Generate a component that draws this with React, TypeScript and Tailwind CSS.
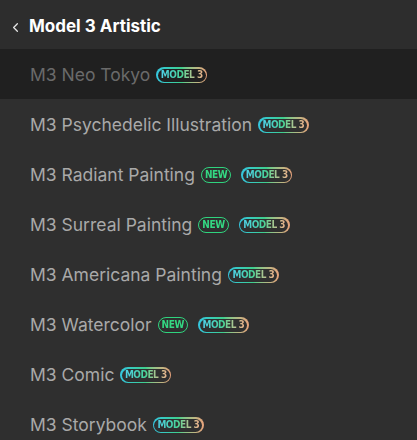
import { ChevronLeft } from "lucide-react";

const styles = [
    { name: "M3 Neo Tokyo", isNew: false, active: true },
    { name: "M3 Psychedelic Illustration", isNew: false },
    { name: "M3 Radiant Painting", isNew: true },
    { name: "M3 Surreal Painting", isNew: true },
    { name: "M3 Americana Painting", isNew: false },
    { name: "M3 Watercolor", isNew: true },
    { name: "M3 Comic", isNew: false },
    { name: "M3 Storybook", isNew: false },
];

const badgeFont = {
    fontFamily: '"DejaVu Sans Condensed", "DejaVu Sans", sans-serif',
};

const ModelBadge = ({ active }: { active?: boolean }) => (
    <span className="inline-flex rounded-full bg-gradient-to-r from-[#35c6e0] via-[#3fcf8c] to-[#e9a27c] p-[1.5px]">
        <span
            className={
                "flex h-[13px] items-center rounded-full px-[3px] " +
                (active ? "bg-[#202020]" : "bg-[#2f2f2f]")
            }
        >
            <span
                style={badgeFont}
                className="inline-block scale-y-110 bg-gradient-to-r from-[#4fd0e8] via-[#48d395] to-[#eab28c] bg-clip-text text-[10px] font-bold leading-none tracking-[-0.5px] text-transparent"
            >
                MODEL 3
            </span>
        </span>
    </span>
);

const NewBadge = () => (
    <span
        style={badgeFont}
        className="flex h-4 items-center rounded-full border-[1.5px] border-[#2fd47e] px-[3px] text-[10px] font-bold leading-none tracking-[-0.4px] text-[#34d883]"
    >
        <span className="inline-block scale-y-110">NEW</span>
    </span>
);

export default function App() {
    return (
        <div className="h-[440px] w-[417px] overflow-hidden bg-[#2f2f2f] font-['Inter',sans-serif]">
            <div className="flex h-[49px] items-center gap-[6px] bg-[#2d2d2d] pl-[8px] pt-[5px]">
                <ChevronLeft className="h-[15px] w-[15px] text-[#e6e6e6]" strokeWidth={2} />
                <span className="text-[17px] font-bold text-white">
                    Model 3 Artistic
                </span>
            </div>
            {styles.map((s) => (
                <div
                    key={s.name}
                    className={clsx(
                        "flex h-[50px] items-center gap-[6px] pl-[30px] pt-[2px]",
                        s.active ? "bg-[#202020]" : "bg-[#2f2f2f]"
                    )}
                >
                    <span
                        className={clsx(
                            "text-[17.5px]",
                            s.active ? "text-[#6a6a6a]" : "text-[#a9a9a9]"
                        )}
                    >
                        {s.name}
                    </span>
                    {s.isNew ? (
                        <span className="mr-[4px] flex">
                            <NewBadge />
                        </span>
                    ) : null}
                    <ModelBadge active={s.active} />
                </div>
            ))}
        </div>
    );
}

function clsx(...parts: string[]) {
    return parts.filter(Boolean).join(" ");
}
